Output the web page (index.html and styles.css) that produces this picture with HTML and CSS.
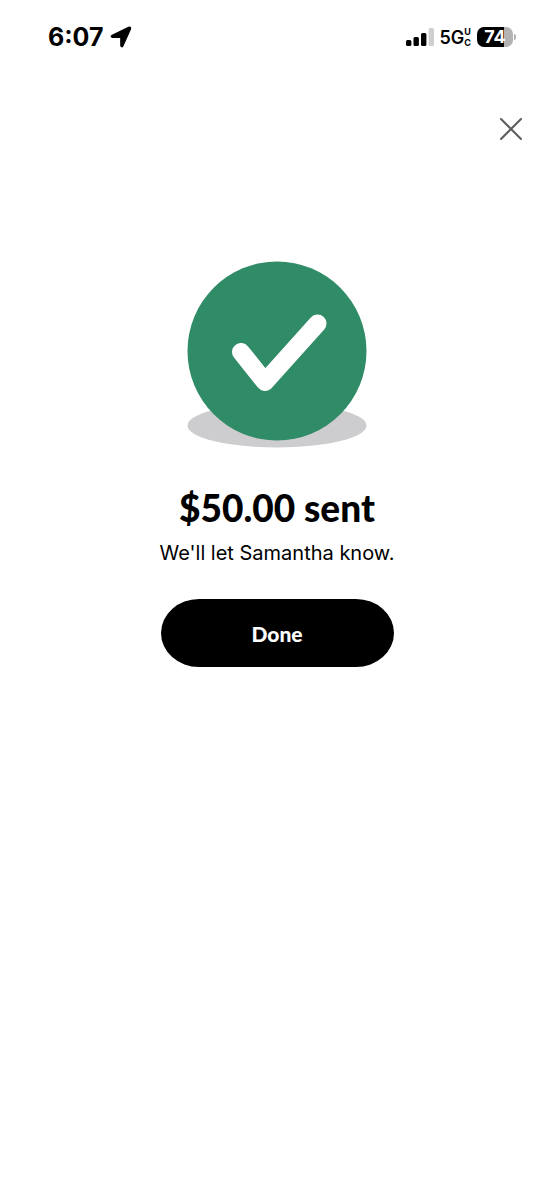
FILE: index.html
```html
<!DOCTYPE html>
<html lang="en">
<head>
    <meta charset="UTF-8">
    <meta name="viewport" content="width=device-width, initial-scale=1.0">
    <title>Payment sent</title>
    <link rel="stylesheet" href="styles.css">
</head>
<body>
    <div class="status">
        <div class="status-left">
            <span class="time">6:07</span>
            <svg width="22" height="22" viewBox="0 0 22 22" aria-hidden="true">
                <path d="M2.200 9.200 18.600 1.400Q21.400 0.500 20.400 3.300L13 19.800Q11.600 21.900 10.800 19.500V11.400H2.500Q-0.200 10.700 2.200 9.200Z" stroke="#000" stroke-width="1.200" stroke-linejoin="round"/>
            </svg>
        </div>
        <div class="status-right">
            <svg width="28" height="18" viewBox="0 0 28 18" aria-hidden="true">
                <rect x="0" y="12" width="5.400" height="6" rx="1.500"/>
                <rect x="7.500" y="9" width="5.400" height="9" rx="1.500"/>
                <rect x="15" y="5" width="5.400" height="13" rx="1.500"/>
                <rect x="22.600" y="0" width="5.400" height="18" rx="1.500" fill="#cfcfcf"/>
            </svg>
            <span class="network">5G<span class="band"><span>U</span><span>C</span></span></span>
            <span class="battery"><span class="level">74</span></span>
        </div>
    </div>

    <div class="toolbar">
        <button class="close" type="button" aria-label="Close">
            <svg width="24" height="24" viewBox="0 0 24 24" aria-hidden="true">
                <path d="M2 2 22 22M22 2 2 22" stroke="#5c5c5e" stroke-width="2" stroke-linecap="round"/>
            </svg>
        </button>
    </div>

    <main class="result">
        <svg width="180" height="187" viewBox="0 0 180 187" aria-hidden="true">
            <ellipse cx="90" cy="164.500" rx="89.500" ry="22" fill="#cdcdd0"/>
            <circle cx="90" cy="90" r="89.500" fill="#308b67"/>
            <path d="M54 91 78 121 130.500 62.500" fill="none" stroke="#fff" stroke-width="18" stroke-linecap="round" stroke-linejoin="round"/>
        </svg>
        <h1>$50.00 sent</h1>
        <p>We'll let Samantha know.</p>
        <button class="done" type="button">Done</button>
    </main>
</body>
</html>
```

FILE: styles.css
```css
*{
    margin: 0;
    padding: 0;
    box-sizing: border-box;
}
body{
    background-color: #fff;
    color: #000;
    font-family: Inter, "Liberation Sans", sans-serif;
}
svg{
    display: block;
}
button{
    border: none;
    font: inherit;
    cursor: pointer;
}

/* status bar */
.status{
    display: flex;
    justify-content: space-between;
    align-items: center;
    height: 74px;
    padding: 0 41px 0 48px;
}
.status-left{
    display: flex;
    align-items: center;
    gap: 6px;
}
.time{
    font-size: 25px;
    font-weight: 700;
}
.status-right{
    display: flex;
    align-items: center;
    gap: 6px;
}
.network{
    display: flex;
    align-items: center;
    font-size: 18px;
    font-weight: 600;
}
.band{
    display: flex;
    flex-direction: column;
    font-size: 9px;
    line-height: 11px;
    font-weight: 700;
}
.battery{
    position: relative;
    width: 36px;
    height: 20px;
    border-radius: 7px;
    background: linear-gradient(to right, #000 76%, #b3b3b3 76%);
    color: #fff;
    font-size: 18px;
    line-height: 20px;
    font-weight: 700;
    text-align: center;
}
.battery::after{
    content: "";
    position: absolute;
    left: 100%;
    top: 7px;
    width: 2px;
    height: 6px;
    margin-left: 1px;
    border-radius: 0 2px 2px 0;
    background-color: #b3b3b3;
}

/* close */
.toolbar{
    display: flex;
    justify-content: flex-end;
    padding: 35px 23px 0;
}
.close{
    padding: 8px;
    background: none;
}

/* confirmation */
.result{
    display: flex;
    flex-direction: column;
    align-items: center;
    padding: 112px 24px 24px;
    text-align: center;
}
.result h1{
    margin-top: 38px;
    font-family: Lato, "Liberation Sans", sans-serif;
    font-size: 37px;
    line-height: 44px;
    font-weight: 900;
}
.result p{
    margin-top: 11px;
    font-size: 20px;
    line-height: 24px;
}
.done{
    width: 42%;
    min-width: 233px;
    height: 68px;
    margin-top: 34px;
    border-radius: 38px / 34px;
    background-color: #000;
    color: #fff;
    font-family: Lato, "Liberation Sans", sans-serif;
    font-size: 21px;
    font-weight: 900;
}
```
